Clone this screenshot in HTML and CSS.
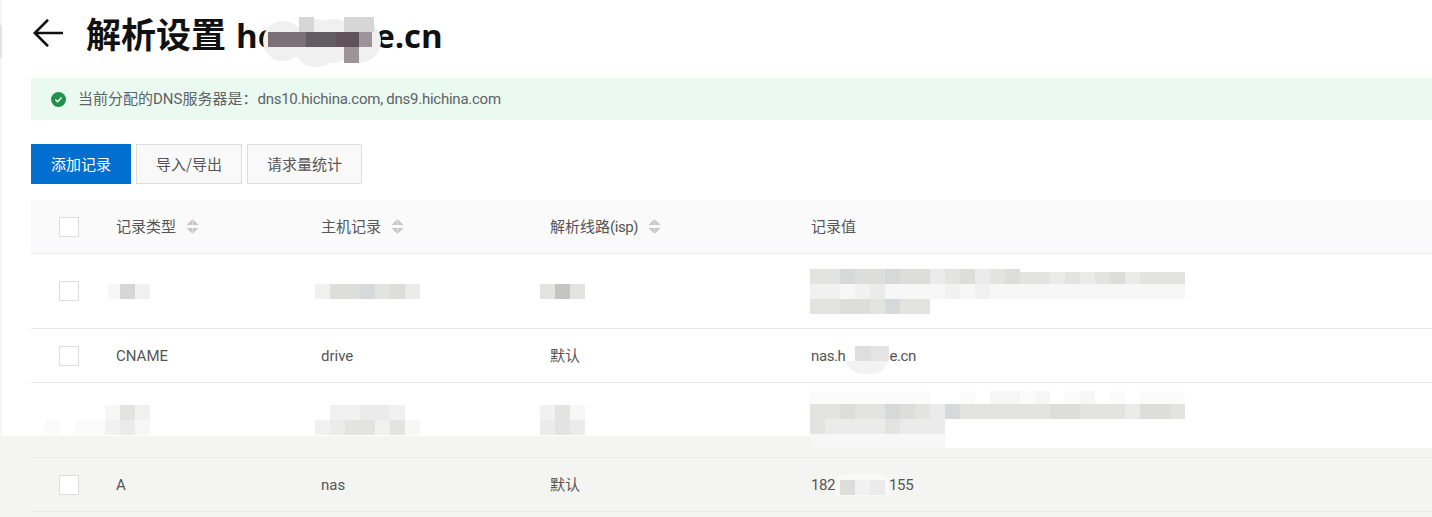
FILE: index.html
```html
<!DOCTYPE html>
<html lang="zh-CN">
<head>
<meta charset="utf-8">
<title>解析设置</title>
<link rel="stylesheet" href="styles.css">
</head>
<body>
<div class="edge"></div>
<div class="band"></div>
<main class="page">
  <header class="head">
    <svg class="back" viewBox="0 0 30 28" width="30" height="28"><path d="M30 14H2M15 .8 1.8 14 15 27.2" fill="none" stroke="#111" stroke-width="2.6"/></svg>
    <h1 class="title">解析设置 <span class="domain">he<span class="title-gap"></span>e.cn
      <svg class="title-cover" viewBox="0 0 120 50" width="120" height="50">
        <g fill="#f0f0f0"><circle cx="22" cy="24" r="20"/><circle cx="55" cy="26" r="24"/><circle cx="72" cy="24" r="22"/><circle cx="98" cy="24" r="22"/></g>
        <path fill="#d6d6d6" d="M38 0h15v15H38zM83 0h30v15H83z"/>
        <path fill="#7a7076" d="M7 15h38v15H7z"/>
        <path fill="#625d60" d="M45 15h30v15H45z"/>
        <path fill="#5f5258" d="M75 15h23v15H75z"/>
        <path fill="#9c9498" d="M98 15h13v15H98zM83 30h15v16H83z"/>
      </svg></span></h1>
  </header>
  <div class="alert">
    <svg class="ok" viewBox="0 0 15 15" width="15" height="15"><circle cx="7.5" cy="7.5" r="7.5" fill="#21914a"/><path d="M4.4 7.6 6.6 9.8l4-4.2" fill="none" stroke="#fff" stroke-width="1.4"/></svg>
    <span>当前分配的DNS服务器是：<span class="dns">dns10.hichina.com, dns9.hichina.com</span></span>
  </div>
  <div class="actions">
    <button class="btn primary">添加记录</button>
    <button class="btn io">导入/导出</button>
    <button class="btn stat">请求量统计</button>
  </div>
  <div class="table">
    <div class="row thead">
      <span class="box"></span>
      <span class="th">记录类型<i class="sort"></i></span>
      <span class="th">主机记录<i class="sort"></i></span>
      <span class="th">解析线路<span class="isp">(isp)</span><i class="sort"></i></span>
      <span class="th">记录值</span>
    </div>
    <div class="row tall">
      <span class="box"></span>
      <span class="mosaic mt"><i class="f1 cut-left"></i><i class="s5"></i><i class="f2"></i></span>
      <span class="mosaic mh"><i class="f2"></i><i class="s2"></i><i class="s2"></i><i class="s3"></i><i class="s1"></i><i class="s2"></i><i class="f3"></i></span>
      <span class="mosaic ml"><i class="s1"></i><i class="s4"></i><i class="s1"></i></span>
      <span class="mosaic mv stack">
        <span class="line top-cut"><i class="s1"></i><i class="s1"></i><i class="s3"></i><i class="s2"></i><i class="s2"></i><i class="s3"></i><i class="s2"></i><i class="s2"></i><i class="f3"></i><i class="s1"></i><i class="s2"></i><i class="f3"></i><i class="s1"></i><i class="s2"></i><i class="s1"></i><i class="s1"></i><i class="f3"></i><i class="s1"></i><i class="f3"></i><i class="s1"></i><i class="s2"></i><i class="f3"></i><i class="s1"></i><i class="s1"></i><i class="s1"></i></span>
        <span class="line"><i class="f2"></i><i class="f2"></i><i class="f1"></i><i class="f2"></i><i class="f3"></i><i class="f1"></i><i class="f1"></i><i class="f1"></i><i class="f1"></i><i class="f2"></i><i class="f1"></i><i class="f2"></i><i class="f1"></i><i class="f1"></i><i class="f1"></i><i class="f1"></i><i class="f1"></i><i class="f1"></i><i class="f1"></i><i class="f1"></i><i class="f1"></i><i class="f1"></i><i class="f1"></i><i class="f1"></i><i class="f1"></i></span>
        <span class="line"><i class="s1"></i><i class="s1"></i><i class="s2"></i><i class="s2"></i><i class="s1"></i><i class="s3"></i><i class="s1"></i><i class="s1"></i></span>
      </span>
    </div>
    <div class="row">
      <span class="box"></span>
      <span>CNAME</span>
      <span>drive</span>
      <span>默认</span>
      <span class="covered">nas.h<span class="hide-a"></span>e.cn</span>
    </div>
    <div class="row tall">
      <span class="box ghost"></span>
      <span class="mosaic mt wide stack">
        <span class="line"><i></i><i></i><i></i><i></i><i class="f1"></i><i class="s1"></i><i class="f2"></i></span>
        <span class="line"><i class="f0"></i><i></i><i class="f0"></i><i class="f0"></i><i class="f2"></i><i class="f3"></i><i class="f1"></i></span>
      </span>
      <span class="mosaic mh stack">
        <span class="line"><i></i><i class="f2"></i><i class="f2"></i><i class="f3"></i><i class="f3"></i><i class="f2"></i><i></i></span>
        <span class="line"><i class="f2"></i><i class="f3"></i><i class="s1"></i><i class="s1"></i><i class="f2"></i><i class="s1"></i><i class="f1"></i></span>
      </span>
      <span class="mosaic ml stack">
        <span class="line"><i class="f2"></i><i class="s1"></i><i class="f1"></i></span>
        <span class="line"><i class="f3"></i><i class="s1"></i><i class="f3"></i></span>
      </span>
      <span class="mosaic mv stack lower">
        <span class="line thin"><i class="f0"></i><i class="f0"></i><i class="f0"></i><i class="f0"></i><i class="f0"></i><i class="f0"></i><i class="f0"></i><i class="f0"></i><i></i><i></i><i class="f0"></i><i></i><i class="f1"></i><i class="f1"></i><i class="f0"></i><i class="f1"></i><i></i><i class="f0"></i><i class="f1"></i><i></i><i class="f0"></i><i></i><i class="f0"></i><i class="f0"></i><i class="f0"></i></span>
        <span class="line"><i class="s1"></i><i class="s1"></i><i class="s2"></i><i class="s1"></i><i class="s1"></i><i class="s3"></i><i class="s2"></i><i class="s1"></i><i class="f3"></i><i class="s3"></i><i class="s1"></i><i class="s1"></i><i class="s1"></i><i class="s1"></i><i class="s1"></i><i class="s1"></i><i class="s2"></i><i class="s2"></i><i class="s1"></i><i class="s1"></i><i class="s1"></i><i class="f3"></i><i class="s2"></i><i class="s2"></i><i class="s1"></i></span>
        <span class="line"><i class="s1"></i><i class="f3"></i><i class="f3"></i><i class="f3"></i><i class="f3"></i><i class="s1"></i><i class="f3"></i><i class="f3"></i><i class="f3"></i></span>
        <span class="line thin"><i class="f1"></i><i class="f1"></i><i class="f1"></i><i class="f1"></i><i class="f1"></i><i class="f1"></i><i class="f1"></i><i class="f1"></i><i class="f1"></i></span>
      </span>
    </div>
    <div class="row on-band">
      <span class="box"></span>
      <span>A</span>
      <span>nas</span>
      <span>默认</span>
      <span class="covered">182<span class="hide-b"><i class="s2"></i><i class="f2"></i><i class="f3"></i></span>155</span>
    </div>
  </div>
</main>
</body>
</html>
```
FILE: styles.css
```css
* { box-sizing: border-box; }
html, body { margin: 0; height: 517px; overflow: hidden; }
body {
  position: relative;
  background: #fff;
  color: #333;
  font: 15px/20px Roboto, "Noto Sans CJK SC", sans-serif;
}
.edge {
  position: absolute;
  left: 0; top: 0;
  width: 2px; height: 436px;
  background: linear-gradient(#f7f7f7 0 25px, #e3e3e3 25px 58px, #f7f7f7 58px);
}
.band {
  position: absolute;
  left: 0; right: 0; top: 436px; bottom: 0;
  background: #f4f4f2;
  clip-path: polygon(0 0, 945px 0, 945px 12px, 100% 12px, 100% 100%, 0 100%);
}
.page { position: relative; padding-left: 31px; }
.head { height: 78px; display: flex; align-items: flex-start; padding: 19px 0 0 2px; }
.back { flex: none; }
.title {
  margin: -8px 0 0 23px;
  font: 700 35px/44px "Noto Sans CJK SC", sans-serif;
  color: #111;
  white-space: nowrap;
}
.domain {
  position: relative;
  margin-left: 2px;
  font: 700 33px/44px "Open Sans", "Noto Sans CJK SC", sans-serif;
}
.title-gap { display: inline-block; width: 98px; }
.title-cover { position: absolute; left: 25px; top: 4px; }
.alert {
  height: 42px;
  display: flex; align-items: center; gap: 12px;
  padding-left: 20px;
  background: #eafaf0;
  color: #5f6267;
}
.ok { flex: none; }
.dns { letter-spacing: -0.25px; }
.actions { display: flex; gap: 5px; padding-top: 24px; height: 80px; align-items: flex-start; }
.btn {
  height: 40px; padding: 0 0 2px;
  border: 1px solid #ddd;
  background: #f9f9f9;
  color: #555;
  font: 15px "Noto Sans CJK SC", sans-serif;
}
.primary { width: 100px; border: 0; background: #006fcf; color: #fff; }
.io { width: 106px; }
.stat { width: 115px; }
.row {
  display: grid;
  grid-template-columns: 85px 205px 229px 261px 1fr;
  align-items: center;
  height: 54px;
  border-bottom: 1px solid #e6eaee;
  color: #555;
}
.thead { background: #fafafa; }
.tall { height: 75px; }
.on-band { border-bottom-color: #e8e8e6; }
.box {
  width: 20px; height: 20px;
  margin-left: 28px;
  background: #fff;
  border: 1px solid #ddd;
}
.ghost { visibility: hidden; }
.th { display: inline-flex; align-items: center; }
.isp { letter-spacing: -0.4px; }
.sort {
  display: inline-block;
  width: 11px; height: 15px;
  margin-left: 11px;
  background:
    linear-gradient(to top left, #c8c8c8 50%, transparent 50%) 0 0 / 5.5px 6px no-repeat,
    linear-gradient(to top right, #c8c8c8 50%, transparent 50%) 5.5px 0 / 5.5px 6px no-repeat,
    linear-gradient(to bottom left, #c8c8c8 50%, transparent 50%) 0 9px / 5.5px 6px no-repeat,
    linear-gradient(to bottom right, #c8c8c8 50%, transparent 50%) 5.5px 9px / 5.5px 6px no-repeat;
}
.mosaic, .line { display: flex; }
.mosaic i, .hide-b i { display: block; flex: none; width: 15px; height: 15px; }
.stack { flex-direction: column; }
.mt { margin-left: -11px; }
.mt.wide { margin-left: -71px; }
.mh { margin-left: -6px; }
.ml { margin-left: -10px; }
.mv { margin-left: -1px; }
.lower { margin-top: -3px; }
.line.thin i { height: 13px; }
.top-cut i:nth-child(n+15) { border-top: 3px solid #fff; }
.mosaic i.cut-left { border-left: 3px solid #fff; }
.s1 { background: #e3e3e2; }
.s2 { background: #dddddc; }
.s3 { background: #d6d8da; }
.s4 { background: #c4c4c4; }
.s5 { background: #d6d6d6; }
.f0 { background: #fbfbfb; }
.f1 { background: #f7f7f7; }
.f2 { background: #f1f1f1; }
.f3 { background: #ebebeb; }
.covered { white-space: nowrap; display: flex; align-items: center; letter-spacing: -0.4px; }
.hide-a {
  flex: none;
  width: 44px; height: 28px;
  margin-top: 8px;
  border-radius: 0 0 18px 18px;
  background:
    linear-gradient(90deg, #fff 0 10px, #dedede 10px 26px, #e4e4e4 26px 44px) 0 0 / 100% 15px no-repeat,
    #f3f3f3;
}
.hide-b {
  display: flex;
  flex: none;
  width: 54px; height: 22px;
  padding: 6px 0 0 5px;
  margin-top: 1px;
  border-radius: 10px 10px 0 0;
  background: #f9f9f8;
}
```
